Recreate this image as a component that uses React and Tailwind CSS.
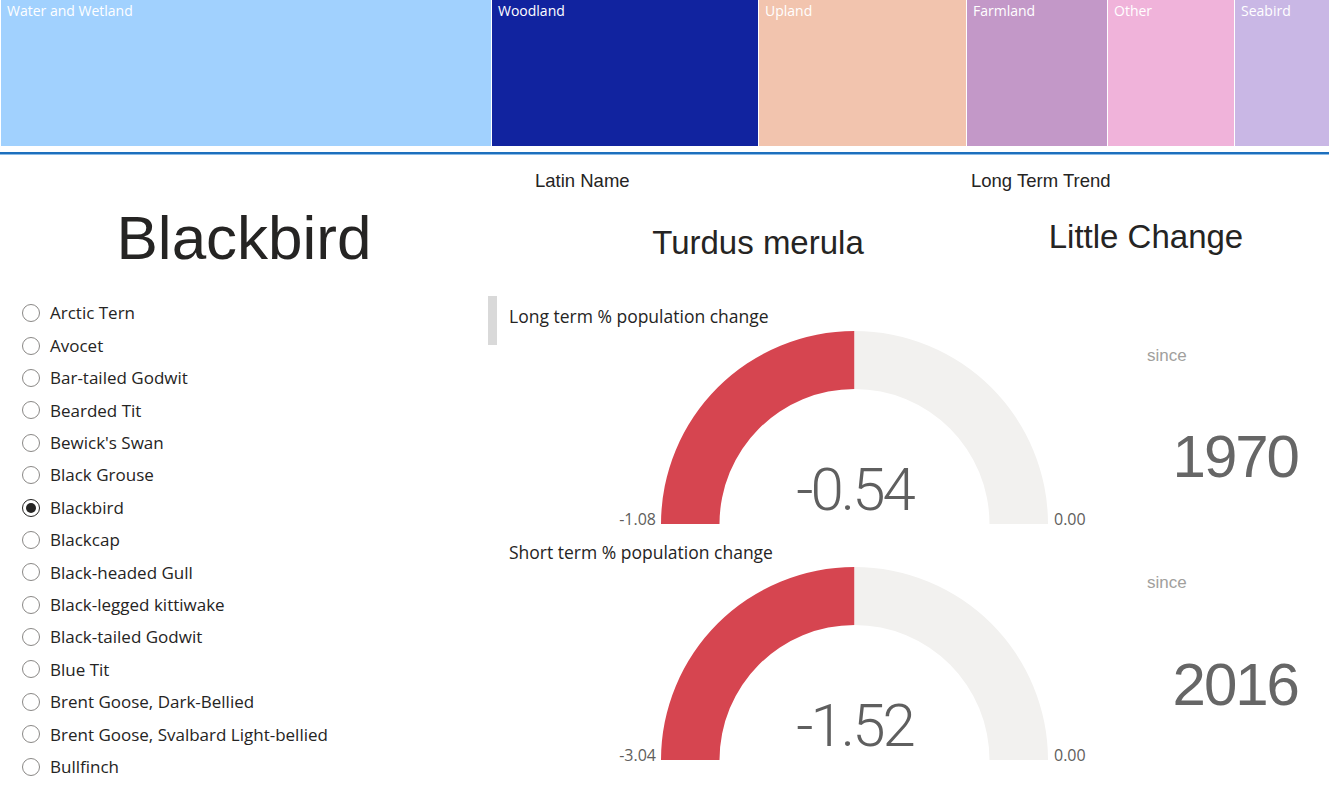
import React from "react";

const tiles = [
  { name: "Water and Wetland", w: "w-[490px]", bg: "bg-[#a1d1fe]" },
  { name: "Woodland", w: "w-[266px]", bg: "bg-[#11239f]" },
  { name: "Upland", w: "w-[207px]", bg: "bg-[#f2c4ae]" },
  { name: "Farmland", w: "w-[140px]", bg: "bg-[#c398c8]" },
  { name: "Other", w: "w-[126px]", bg: "bg-[#f0b3da]" },
  { name: "Seabird", w: "flex-1", bg: "bg-[#c9b7e5]" },
];

const birds = [
  "Arctic Tern",
  "Avocet",
  "Bar-tailed Godwit",
  "Bearded Tit",
  "Bewick's Swan",
  "Black Grouse",
  "Blackbird",
  "Blackcap",
  "Black-headed Gull",
  "Black-legged kittiwake",
  "Black-tailed Godwit",
  "Blue Tit",
  "Brent Goose, Dark-Bellied",
  "Brent Goose, Svalbard Light-bellied",
  "Bullfinch",
];

const segoe = "font-['Open_Sans','Noto_Sans',sans-serif]";
const din = "font-['Liberation_Sans','Roboto',sans-serif]";

function Radio({ checked }) {
  if (checked) {
    return (
      <span className="flex h-[18px] w-[18px] shrink-0 items-center justify-center rounded-full border-[1.5px] border-[#252423]">
        <span className="h-[10px] w-[10px] rounded-full bg-[#252423]" />
      </span>
    );
  }
  return <span className="h-[18px] w-[18px] shrink-0 rounded-full border-[1.5px] border-[#8a8886]" />;
}

function Gauge({ value, min, max }) {
  return (
    <div className="flex items-end">
      <div className={`w-[147px] text-right text-[16px] leading-[10px] text-[#605e5c] ${segoe}`}>{min}</div>
      <div className="relative ml-[5px] h-[193px] w-[387px]">
        <svg width="387" height="193" viewBox="0 0 387 193">
          <path d="M0 193 A193.5 193 0 0 1 193.5 0 L193.5 58 A135 135 0 0 0 58.5 193 Z" fill="#d64550" />
          <path d="M193.5 0 A193.5 193 0 0 1 387 193 L328.5 193 A135 135 0 0 0 193.5 58 Z" fill="#f2f1ef" />
        </svg>
        <div className="absolute inset-x-0 bottom-[4px] text-center font-['Roboto',sans-serif] text-[60px] font-light leading-none tracking-[-3px] text-[#5f5f5f]">
          {value}
        </div>
      </div>
      <div className={`ml-[6px] text-[16px] leading-[10px] text-[#605e5c] ${segoe}`}>{max}</div>
    </div>
  );
}

export default function App() {
  return (
    <div className="h-[787px] w-[1329px] overflow-hidden bg-white text-[#252423]">
      {/* treemap */}
      <div className="flex h-[146px] gap-px bg-white pl-px">
        {tiles.map((t) => (
          <div key={t.name} className={`${t.w} ${t.bg} px-[6px] text-[14px] leading-[22px] text-white ${segoe}`}>
            {t.name}
          </div>
        ))}
      </div>
      <div className="mt-[6px] h-[2px] bg-[#1d6fbd]" />
      <div className="h-px bg-[#8cbbe6]" />

      <div className="flex">
        {/* left column */}
        <div className="w-[480px]">
          <div className={`mt-[52px] pl-[8px] text-center text-[62px] leading-none text-[#252423] ${din}`}>Blackbird</div>
          <div className="mt-[28px] flex flex-col pl-[22px]">
            {birds.map((b) => (
              <div key={b} className={`flex h-[32.4px] items-center gap-[10px] text-[17px] ${segoe}`}>
                <Radio checked={b === "Blackbird"} />
                <span className="whitespace-nowrap">{b}</span>
              </div>
            ))}
          </div>
        </div>

        {/* right part */}
        <div className="flex-1">
          <div className="flex h-[141px]">
            <div className="w-[483px]">
              <div className={`mt-[16px] h-[20px] whitespace-nowrap pl-[55px] text-[18.5px] leading-[20px] ${din}`}>Latin Name</div>
              <div className={`mt-[33px] pl-[73px] text-center text-[33px] leading-[38px] ${din}`}>Turdus merula</div>
            </div>
            <div className="flex-1">
              <div className={`mt-[16px] h-[20px] whitespace-nowrap pl-[8px] text-[18.5px] leading-[20px] ${din}`}>Long Term Trend</div>
              <div className={`mt-[27px] text-center text-[33px] leading-[38px] ${din}`}>Little Change</div>
            </div>
          </div>

          <div className="flex">
            {/* gauges */}
            <div className="w-[620px] pl-[8px]">
              <div className="flex">
                <div className="h-[49px] w-[9px] shrink-0 bg-[#d9d9d9]" />
                <div className="pl-[12px]">
                  <div className={`mt-[10px] h-[20px] whitespace-nowrap text-[17.5px] leading-[20px] ${segoe}`}>Long term % population change</div>
                  <div className="mt-[5px]">
                    <Gauge value="-0.54" min="-1.08" max="0.00" />
                  </div>
                </div>
              </div>
              <div className="pl-[21px]">
                <div className={`mt-[18px] h-[20px] whitespace-nowrap text-[17.5px] leading-[20px] ${segoe}`}>Short term % population change</div>
                <div className="mt-[5px]">
                  <Gauge value="-1.52" min="-3.04" max="0.00" />
                </div>
              </div>
            </div>

            {/* since */}
            <div className={`flex-1 ${din}`}>
              <div className="mt-[50px] pl-[47px] text-[17px] leading-[20px] text-[#a19f9d]">since</div>
              <div className="mt-[61px] pr-[31px] text-right text-[60px] leading-[60px] tracking-[-2px] text-[#666666]">1970</div>
              <div className="mt-[86px] pl-[47px] text-[17px] leading-[20px] text-[#a19f9d]">since</div>
              <div className="mt-[62px] pr-[31px] text-right text-[60px] leading-[60px] tracking-[-2px] text-[#666666]">2016</div>
            </div>
          </div>
        </div>
      </div>
    </div>
  );
}
